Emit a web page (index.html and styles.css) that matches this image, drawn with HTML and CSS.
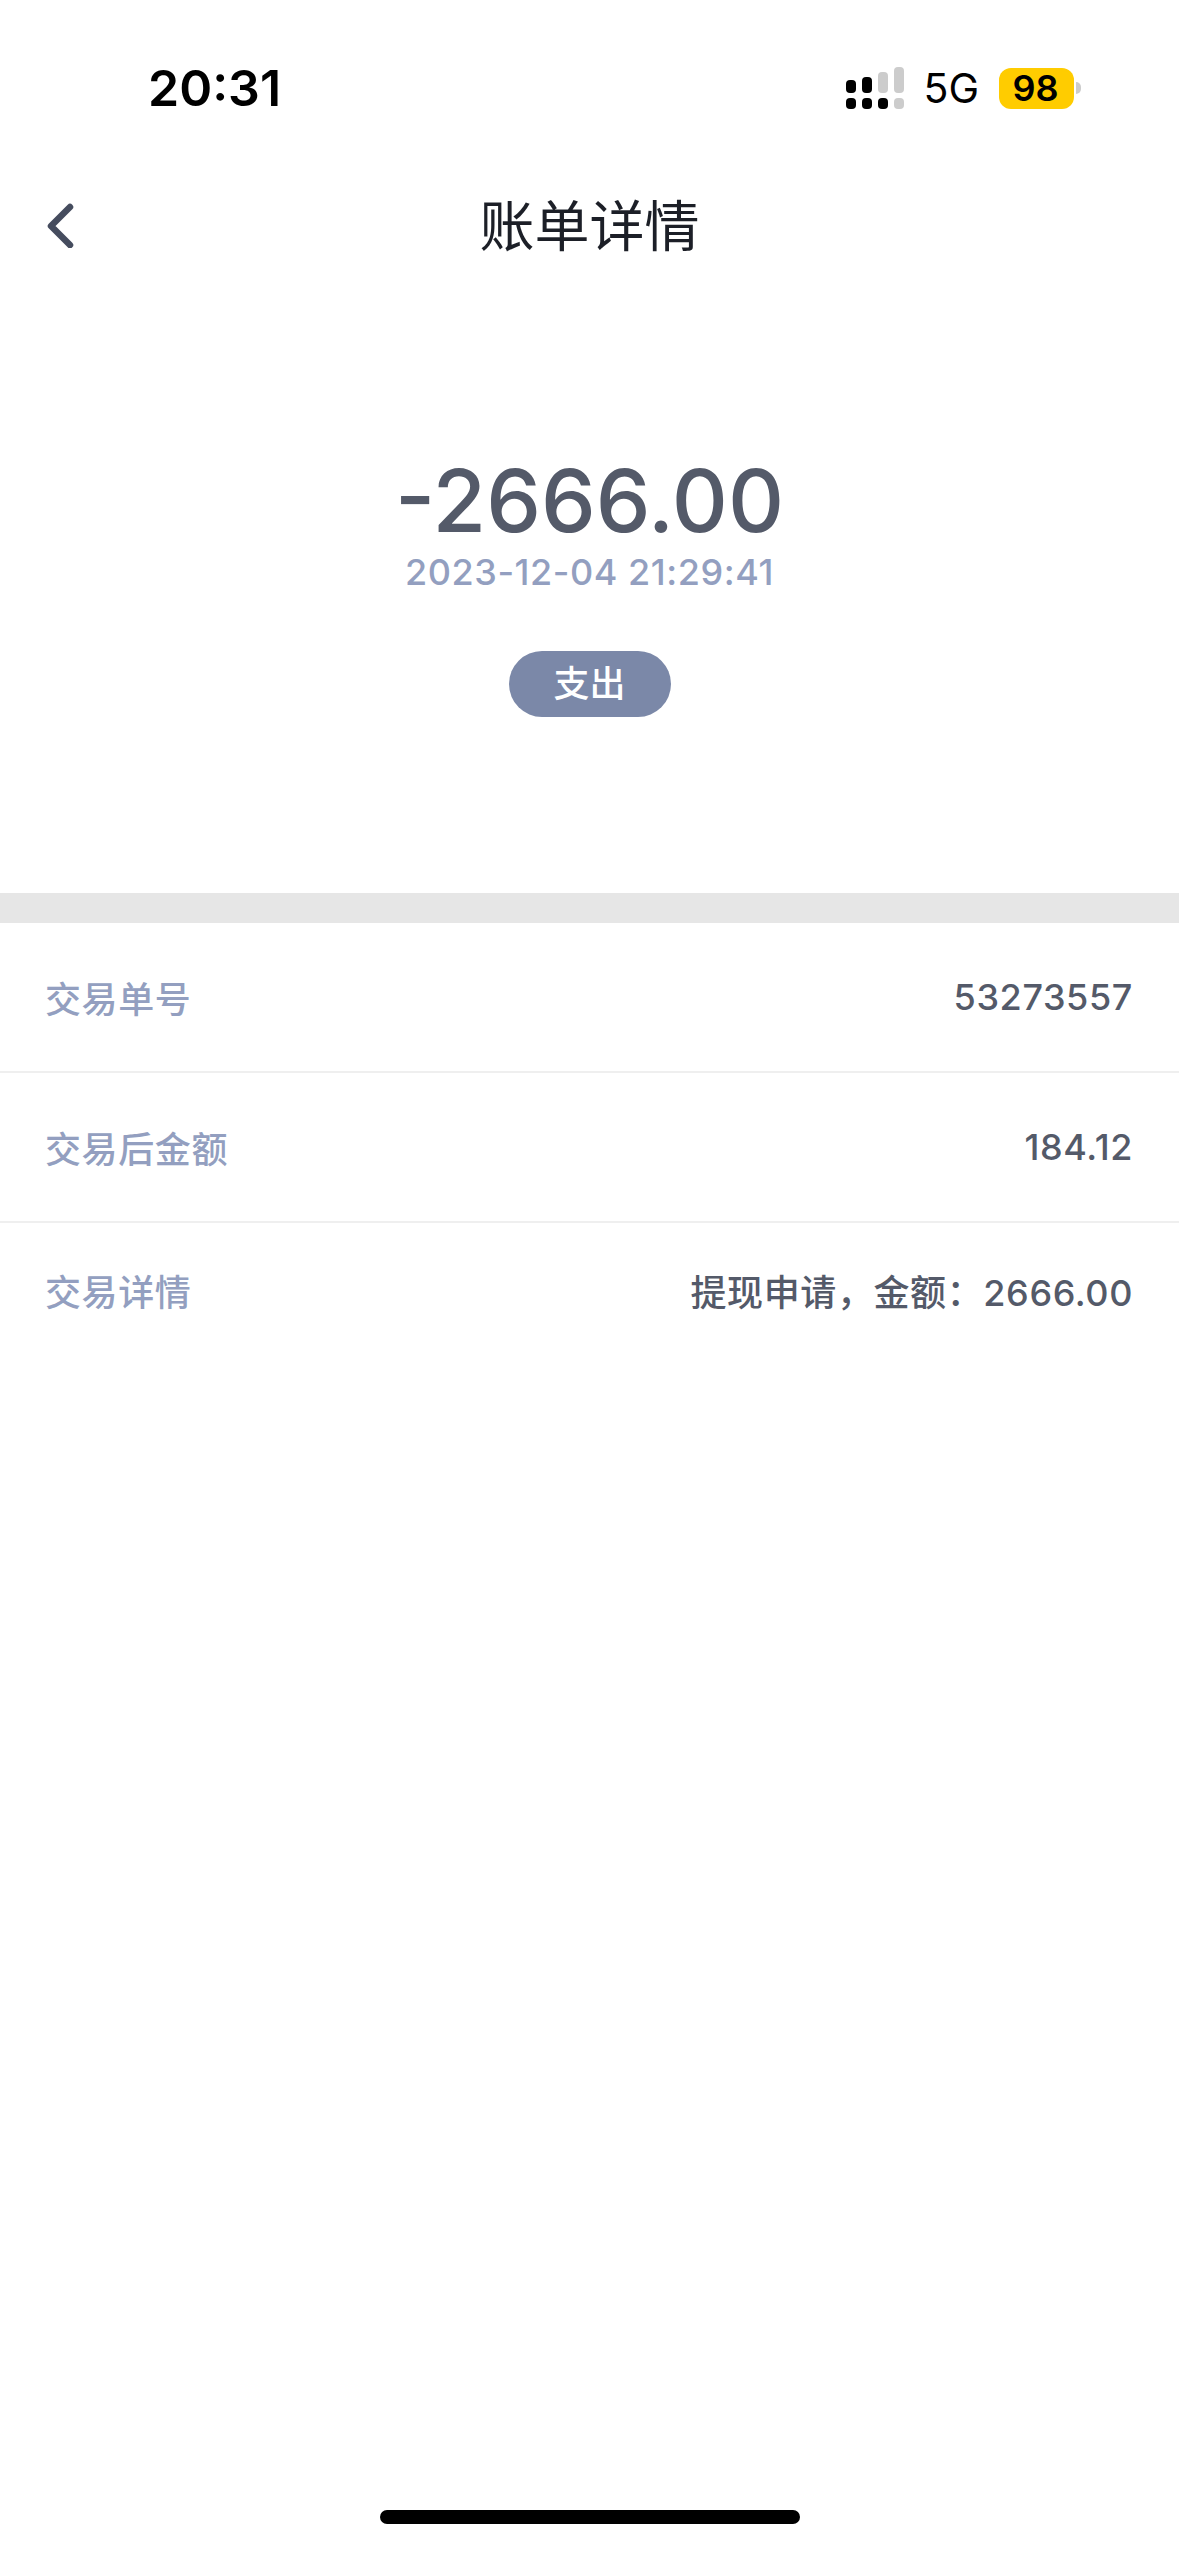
FILE: index.html
```html
<!DOCTYPE html>
<html lang="zh-CN">
<head>
    <meta charset="UTF-8">
    <meta name="viewport" content="width=device-width, initial-scale=1.0">
    <title>账单详情</title>
    <link rel="stylesheet" href="styles.css">
</head>
<body>
    <div class="page">
        <div class="status-bar">
            <span class="time">20:31</span>
            <div class="status-right">
                <svg class="signal" width="58" height="42" viewBox="0 0 58 42">
                    <rect x="0" y="13" width="10" height="13" rx="4" fill="#000"/>
                    <rect x="16" y="10" width="10" height="16" rx="4" fill="#000"/>
                    <rect x="32" y="5" width="10" height="21" rx="4" fill="#ccc"/>
                    <rect x="48" y="0" width="10" height="26" rx="4" fill="#ccc"/>
                    <rect x="0" y="31" width="10" height="11" rx="4" fill="#000"/>
                    <rect x="16" y="31" width="10" height="11" rx="4" fill="#000"/>
                    <rect x="32" y="31" width="10" height="11" rx="4" fill="#000"/>
                    <rect x="48" y="31" width="10" height="11" rx="4" fill="#ccc"/>
                </svg>
                <span class="network">5G</span>
                <div class="battery">
                    <span class="battery-level">98</span>
                    <span class="battery-nub"></span>
                </div>
            </div>
        </div>

        <div class="nav-bar">
            <svg class="back" width="28" height="46" viewBox="0 0 28 46">
                <path d="M24 5 L5 24 L24 43" fill="none" stroke="#454c5e" stroke-width="6.5" stroke-linecap="round" stroke-linejoin="round"/>
            </svg>
            <h1>账单详情</h1>
        </div>

        <div class="summary">
            <div class="amount">-2666.00</div>
            <div class="date">2023-12-04 21:29:41</div>
            <div class="tag">支出</div>
        </div>

        <div class="band"></div>

        <div class="rows">
            <div class="row">
                <span class="label">交易单号</span>
                <span class="value">53273557</span>
            </div>
            <div class="row">
                <span class="label">交易后金额</span>
                <span class="value">184.12</span>
            </div>
            <div class="row row-last">
                <span class="label">交易详情</span>
                <span class="value">提现申请，金额：2666.00</span>
            </div>
        </div>

        <div class="home-indicator"></div>
    </div>
</body>
</html>
```

FILE: styles.css
```css
* {
    margin: 0;
    padding: 0;
    box-sizing: border-box;
}

body {
    font-family: Inter, "Noto Sans CJK SC", sans-serif;
    background-color: #fff;
}

.page {
    width: 1179px;
    height: 2556px;
    display: flex;
    flex-direction: column;
    overflow: hidden;
}

/* Status bar */
.status-bar {
    height: 176px;
    padding: 0 98px 0 148px;
    display: flex;
    justify-content: space-between;
    align-items: center;
}

.time {
    font-size: 50px;
    font-weight: 600;
    color: #000;
}

.status-right {
    display: flex;
    align-items: center;
}

.signal {
    margin-right: 19px;
}

.network {
    font-size: 41px;
    color: #000;
    margin-right: 20px;
}

.battery {
    display: flex;
    align-items: center;
}

.battery-level {
    width: 75px;
    height: 41px;
    padding-right: 2px;
    background-color: #ffcc00;
    border-radius: 12px;
    font-size: 36px;
    font-weight: 600;
    line-height: 41px;
    text-align: center;
    color: #000;
}

.battery-nub {
    width: 5px;
    height: 12px;
    margin-left: 2px;
    background-color: #ccc;
    border-radius: 0 6px 6px 0;
}

/* Nav */
.nav-bar {
    height: 100px;
    padding-bottom: 8px;
    position: relative;
    display: flex;
    justify-content: center;
    align-items: center;
}

.back {
    position: absolute;
    left: 46px;
    top: 26px;
}

.nav-bar h1 {
    font-size: 55px;
    font-weight: 400;
    color: #1c1f27;
}

/* Amount */
.summary {
    height: 617px;
    padding-top: 175px;
    display: flex;
    flex-direction: column;
    align-items: center;
}

.amount {
    font-size: 87px;
    font-weight: 500;
    line-height: 99px;
    color: #545a69;
}

.date {
    font-size: 36px;
    font-weight: 500;
    line-height: 44px;
    letter-spacing: 0.55px;
    color: #939fc0;
}

.tag {
    width: 162px;
    height: 66px;
    margin-top: 57px;
    background-color: #7b88a8;
    border-radius: 33px;
    font-size: 36px;
    font-weight: 500;
    line-height: 66px;
    text-align: center;
    color: #fff;
}

.band {
    height: 30px;
    background-color: #e6e6e6;
}

/* Detail rows */
.row {
    height: 150px;
    padding: 0 46px 0 45px;
    border-bottom: 2px solid #efefef;
    display: flex;
    justify-content: space-between;
    align-items: center;
}

.row-last {
    height: 134px;
    border-bottom: none;
}

.label {
    font-size: 36px;
    font-weight: 500;
    letter-spacing: 0.6px;
    color: #939fc0;
}

.value {
    font-size: 36px;
    font-weight: 500;
    letter-spacing: 0.6px;
    color: #545a69;
}

.home-indicator {
    width: 420px;
    height: 14px;
    margin: auto auto 0;
    position: relative;
    top: -32px;
    background-color: #000;
    border-radius: 7px;
}
```
